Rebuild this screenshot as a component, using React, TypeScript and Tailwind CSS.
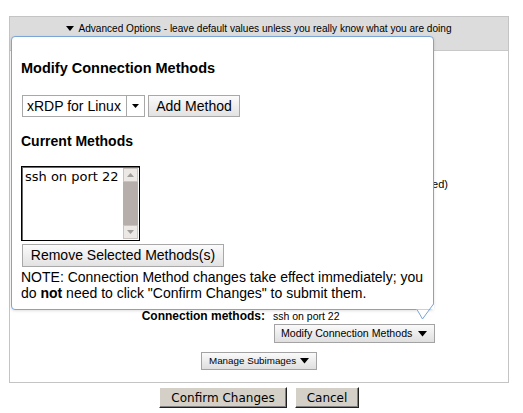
import React from "react"

function Tri({ className = "" }: { className?: string }) {
  return (
    <svg width="9" height="6" viewBox="0 0 9 6" className={"shrink-0 " + className}>
      <polygon points="0,0 9,0 4.5,5.5" fill="#000" />
    </svg>
  )
}

function ScrollArrow({ up }: { up?: boolean }) {
  return (
    <div className="h-[14px] w-[15px] bg-[#ebe8e5] border border-[#c8c3bf] flex items-center justify-center">
      <svg width="7" height="4" viewBox="0 0 7 4">
        <polygon points={up ? "0,4 7,4 3.5,0" : "0,0 7,0 3.5,4"} fill="#a09c98" />
      </svg>
    </div>
  )
}

export default function App() {
  return (
    <div className="relative w-[523px] h-[413px] bg-white text-black font-['Liberation_Sans',Arial,sans-serif] overflow-hidden">
      <div className="pt-4 pl-[9px]">
        <div className="w-[500px] h-[367px] border border-[#c4c4c4] flex flex-col">
          <div className="h-[34px] shrink-0 bg-[#dcdcdc] border-b border-[#c8c8c8] pt-[4px] text-center text-[10.1px] leading-[14px] whitespace-nowrap">
            <span className="inline-flex items-center gap-[4px]">
              <svg width="8" height="5" viewBox="0 0 8 5"><polygon points="0,0 8,0 4,5" fill="#000" /></svg>
              Advanced Options - leave default values unless you really know what you are doing
            </span>
          </div>

          <div className="flex-1 flex flex-col">
            <div className="h-[258px] pt-[126px] pr-[60px] text-right text-[11px] leading-[14px]">
              Use default (recommended)
            </div>

            <div className="flex items-center h-[14px] text-[12px] leading-[14px]">
              <div className="w-[255px] text-right font-bold">Connection methods:</div>
              <div className="ml-[8px] text-[10.5px]">ssh on port 22</div>
            </div>

            <div className="mt-[1px] pl-[264px]">
              <button className="h-[19px] w-[161px] border border-[#a3a3a3] bg-gradient-to-b from-[#fafafa] to-[#dfdfdf] text-[10.6px] whitespace-nowrap flex items-center pl-[6px] pr-[7px] justify-between">
                <span>Modify Connection Methods</span>
                <Tri />
              </button>
            </div>

            <div className="mt-[9px] flex justify-center">
              <button className="h-[18px] w-[116px] border border-[#a3a3a3] bg-gradient-to-b from-[#fafafa] to-[#dfdfdf] text-[9.8px] whitespace-nowrap flex items-center pl-[7px] pr-[7px] justify-between">
                <span>Manage Subimages</span>
                <Tri />
              </button>
            </div>
          </div>
        </div>

        <div className="w-[500px] mt-[4px] flex justify-center gap-[8px] font-['DejaVu_Sans',sans-serif] text-[12px]">
          <button className="h-[21px] w-[128px] bg-[#d4d0c8] border border-t-white border-l-white border-b-[#202020] border-r-[#202020] shadow-[inset_-1px_-1px_0_#808080]">
            Confirm Changes
          </button>
          <button className="h-[21px] w-[64px] bg-[#d4d0c8] border border-t-white border-l-white border-b-[#202020] border-r-[#202020] shadow-[inset_-1px_-1px_0_#808080]">
            Cancel
          </button>
        </div>
      </div>

      {/* popover */}
      <div className="absolute left-[11px] top-[36px] w-[423px] h-[274px] bg-white border border-[#7aa5d6] rounded-[4px] shadow-[0_1px_3px_rgba(0,0,0,0.12)] pl-[9px] pt-[22px]">
        <div className="text-[14.5px] leading-[18px] font-bold">Modify Connection Methods</div>

        <div className="mt-[18px] flex items-center">
          <div className="ml-[1px] h-[22px] w-[123px] border border-[#a8a8a8] flex bg-white">
            <div className="flex-1 text-[14px] leading-[20px] pl-[4px]">xRDP for Linux</div>
            <div className="w-[18px] border-l border-[#a8a8a8] flex items-center justify-center">
              <svg width="7" height="4" viewBox="0 0 7 4"><polygon points="0,0 7,0 3.5,4" fill="#000" /></svg>
            </div>
          </div>
          <button className="ml-[3px] h-[22px] w-[92px] border border-[#a8a8a8] bg-gradient-to-b from-[#fbfbfb] to-[#e2e2e2] text-[14px]">
            Add Method
          </button>
        </div>

        <div className="mt-[15px] text-[14px] leading-[18px] font-bold">Current Methods</div>

        <div className="mt-[16px] h-[75px] w-[119px] border border-black shadow-[inset_1px_1px_0_#6a6a6a] flex bg-white">
          <div className="flex-1 pl-[3px] pt-[2px] font-['DejaVu_Sans',sans-serif] text-[13px] leading-[16px]">ssh on port 22</div>
          <div className="w-[15px] my-[1px] mr-[1px] bg-[#b5aeaa] flex flex-col justify-between">
            <ScrollArrow up />
            <ScrollArrow />
          </div>
        </div>

        <button className="mt-[3px] ml-[1px] h-[23px] w-[202px] border border-[#a8a8a8] bg-gradient-to-b from-[#fbfbfb] to-[#e2e2e2] text-[14px]">
          Remove Selected Methods(s)
        </button>

        <p className="mt-[2px] text-[14px] leading-[16px]">
          NOTE: Connection Method changes take effect immediately; you do <b>not</b> need to click "Confirm Changes" to submit them.
        </p>
      </div>

      {/* popover tail */}
      <svg className="absolute left-[410px] top-[299px]" width="26" height="23" viewBox="0 0 26 23">
        <polygon points="6,9.5 12.5,20 24,4.5 24,10.5 6,10.5" fill="#fff" />
        <polyline points="7,10.5 12.5,20 23.5,5" fill="none" stroke="#7aa5d6" strokeWidth="1" />
      </svg>
    </div>
  )
}
